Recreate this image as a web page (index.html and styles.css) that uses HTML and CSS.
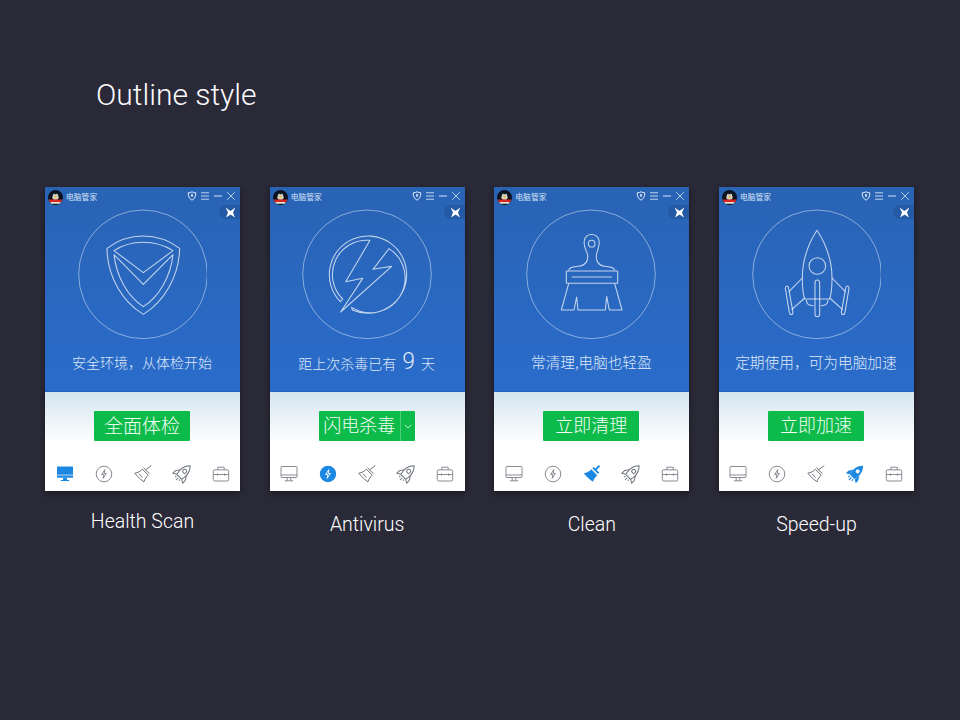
FILE: index.html
```html
<!DOCTYPE html>
<html lang="zh">
<head>
<meta charset="utf-8">
<title>Outline style</title>
<link rel="stylesheet" href="styles.css">
</head>
<body>
<svg class="sprite" aria-hidden="true">
  <defs>
    <symbol id="penguin" viewBox="0 0 14 14">
      <circle cx="7" cy="7" r="7" fill="#0c1420"/>
      <ellipse cx="7" cy="6.800" rx="2.900" ry="2.600" fill="#d9d2c0"/>
      <circle cx="5.800" cy="4.600" r="1" fill="#fff"/>
      <circle cx="8.200" cy="4.600" r="1" fill="#fff"/>
      <circle cx="5.900" cy="4.700" r=".45" fill="#111"/>
      <circle cx="8.100" cy="4.700" r=".45" fill="#111"/>
      <path d="M5.500 5.900h3L7 7.300z" fill="#f4b400"/>
      <path d="M.6 8.800h12.800c-.2 1-.6 1.800-1.100 2.500H1.700C1.200 10.600.8 9.800.6 8.800z" fill="#d8231f"/>
      <path d="M2 11.300h10L10.800 12.800H3.200z" fill="#e9e3d2"/>
    </symbol>
    <symbol id="win-shield" viewBox="0 0 10 10">
      <path d="M5 .8C6.200 1.500 7.500 1.800 8.800 1.800 8.900 5 7.700 7.800 5 9.200 2.300 7.800 1.100 5 1.200 1.800 2.500 1.800 3.800 1.500 5 .8z" fill="none" stroke="#dce8f8" stroke-width="1"/>
      <path d="M5 3v2.800" stroke="#fff" stroke-width="1.400"/>
    </symbol>
    <symbol id="win-menu" viewBox="0 0 10 10">
      <path d="M1 1.800h8M1 5h8M1 8.200h8" stroke="#c3d6f0" stroke-width="1"/>
    </symbol>
    <symbol id="win-min" viewBox="0 0 10 10">
      <path d="M1 5h8" stroke="#d4e2f5" stroke-width="1"/>
    </symbol>
    <symbol id="win-close" viewBox="0 0 10 10">
      <path d="M1.200 1.200l7.600 7.600M8.800 1.200L1.200 8.800" stroke="#c3d6f0" stroke-width=".9"/>
    </symbol>
    <symbol id="butterfly" viewBox="0 0 10 10">
      <path d="M.6.400L4.600 3.300 5.300 3.300 9.400.400 7.300 5 9 9.600 5.400 7 4.800 7 1 9.600 2.700 5z" fill="#fff"/>
    </symbol>

    <symbol id="nav-monitor" viewBox="0 0 20 20">
      <g fill="none" stroke="#7b8087" stroke-width=".9">
        <rect x="2" y="2.500" width="16" height="11" rx=".8"/>
        <path d="M2 11h16M8.200 13.500v3.200M11.800 13.500v3.200M5.800 16.800h8.400"/>
      </g>
    </symbol>
    <symbol id="nav-monitor-on" viewBox="0 0 20 20">
      <rect x="2" y="2.500" width="16" height="8.200" fill="#1c88e2"/>
      <rect x="2" y="11.400" width="16" height="2.300" fill="#1c88e2"/>
      <path d="M8 13.700h4v2.300h2.200v1H5.800v-1H8z" fill="#1c88e2"/>
    </symbol>
    <symbol id="nav-bolt" viewBox="0 0 20 20">
      <circle cx="10" cy="10" r="7.800" fill="none" stroke="#7b8087" stroke-width=".9"/>
      <path d="M10.900 5.600L7.600 10.500h2.300l-.8 3.900 3.300-5h-2.300z" fill="none" stroke="#7b8087" stroke-width=".9" stroke-linejoin="round"/>
    </symbol>
    <symbol id="nav-bolt-on" viewBox="0 0 20 20">
      <circle cx="10" cy="10" r="8.200" fill="#1c88e2"/>
      <path d="M10.900 5.600L7.600 10.500h2.300l-.8 3.900 3.300-5h-2.300z" fill="none" stroke="#fff" stroke-width=".9" stroke-linejoin="round"/>
    </symbol>
    <symbol id="nav-brush" viewBox="0 0 20 20">
      <g fill="none" stroke="#6f747b" stroke-width="1" stroke-linejoin="round">
        <path d="M1.800 9.200C5 8.700 7.500 7.300 9.300 5.200L15.200 11.200C13.200 13 11.700 15 11 17.800 8.200 16 4.800 13 1.800 9.200z"/>
        <path d="M10.400 3.700L16.600 9.800M12.500 5.900L18.300 1.600"/>
        <path d="M6 9.700l3.500 3.800"/>
      </g>
    </symbol>
    <symbol id="nav-brush-on" viewBox="0 0 20 20">
      <path d="M1.800 9.200C5 8.700 7.500 7.300 9.300 5.200L15.200 11.200C13.200 13 11.700 15 11 17.800 8.200 16 4.800 13 1.800 9.200z" fill="#1c88e2"/>
      <path d="M10.400 4.300l5.600 5.600 1.200-1.400-2.600-2.600 3.600-3.600-1.400-1.300-3.500 3.400-1.500-1.500z" fill="#1c88e2"/>
    </symbol>
    <symbol id="nav-rocket" viewBox="0 0 20 20">
      <g fill="none" stroke="#6f747b" stroke-width="1" stroke-linejoin="round" transform="rotate(45 10 10)">
        <path d="M10 -1.500C6.800 1.800 5.600 5.500 5.800 9.500L6.500 14H13.500L14.200 9.500C14.400 5.500 13.200 1.800 10 -1.500z"/>
        <circle cx="10" cy="6.200" r="2"/>
        <path d="M5.800 8L3 12.500V16L6.500 14M14.200 8L17 12.500V16L13.500 14"/>
        <path d="M10 15.500V18.500M7.500 15.500V17M12.500 15.500V17"/>
      </g>
    </symbol>
    <symbol id="nav-rocket-on" viewBox="0 0 20 20">
      <g transform="rotate(45 10 10)">
        <path d="M10 -1.500C6.800 1.800 5.600 5.500 5.800 9.500L6.500 14H13.500L14.200 9.500C14.400 5.500 13.200 1.800 10 -1.500z" fill="#1c88e2"/>
        <circle cx="10" cy="6.200" r="2" fill="#fff"/>
        <path d="M5.600 8L3 12.500V16L6.300 14zM14.400 8L17 12.500V16L13.700 14z" fill="#1c88e2"/>
        <path d="M10 15V18.500M7.500 15V17M12.500 15V17" stroke="#1c88e2" stroke-width="1.200"/>
      </g>
    </symbol>
    <symbol id="nav-bag" viewBox="0 0 20 20">
      <g fill="none" stroke="#7b8087" stroke-width=".9">
        <rect x="2.300" y="5.800" width="15.400" height="11.200" rx="1.500"/>
        <path d="M6.800 5.800V3.200h6.400v2.600M2.300 10.500h15.400M6.500 9.500v2.200M13.500 9.500v2.200"/>
      </g>
    </symbol>
  </defs>
</svg>

<main class="page">
  <h1 class="title">Outline style</h1>
  <div class="row">

    <section class="column">
      <article class="app">
        <div class="hero">
          <header class="bar">
            <svg class="logo"><use href="#penguin"/></svg>
            <span class="name">电脑管家</span>
            <span class="controls">
              <svg class="ctl"><use href="#win-shield"/></svg>
              <svg class="ctl"><use href="#win-menu"/></svg>
              <svg class="ctl"><use href="#win-min"/></svg>
              <svg class="ctl"><use href="#win-close"/></svg>
            </span>
          </header>
          <span class="pill"><svg class="pill-icon"><use href="#butterfly"/></svg></span>
          <svg class="art" viewBox="109 87 390 390">
            <circle class="ring" cx="307" cy="283" r="193"/>
            <g class="line">
              <path d="M199 205C265 156 350 156 417 205C415 290 370 365 308 403C245 365 200 290 199 205Z"/>
              <path d="M220 212C270 178 345 178 397 212L308 278Z"/>
              <path d="M220 224L308 313L397 224C390 290 355 350 308 380C262 350 227 290 220 224Z"/>
            </g>
          </svg>
          <p class="status">安全环境，从体检开始</p>
        </div>
        <div class="lower">
          <button class="cta cta-large" type="button">全面体检</button>
          <nav class="nav">
            <svg class="tab"><use href="#nav-monitor-on"/></svg>
            <svg class="tab"><use href="#nav-bolt"/></svg>
            <svg class="tab"><use href="#nav-brush"/></svg>
            <svg class="tab"><use href="#nav-rocket"/></svg>
            <svg class="tab"><use href="#nav-bag"/></svg>
          </nav>
        </div>
      </article>
      <p class="caption caption-high">Health Scan</p>
    </section>

    <section class="column">
      <article class="app">
        <div class="hero">
          <header class="bar">
            <svg class="logo"><use href="#penguin"/></svg>
            <span class="name">电脑管家</span>
            <span class="controls">
              <svg class="ctl"><use href="#win-shield"/></svg>
              <svg class="ctl"><use href="#win-menu"/></svg>
              <svg class="ctl"><use href="#win-min"/></svg>
              <svg class="ctl"><use href="#win-close"/></svg>
            </span>
          </header>
          <span class="pill"><svg class="pill-icon"><use href="#butterfly"/></svg></span>
          <svg class="art" viewBox="111 88 390 390">
            <circle class="ring" cx="306" cy="284" r="193"/>
            <g class="line">
              <path d="M315 182A103 103 0 0 0 233 358L226 366A116 116 0 1 1 262 391L260 383A103 103 0 0 0 372 207"/>
              <path d="M315 182L242 306L293 296L227 397L380 260L324 269L372 207"/>
            </g>
          </svg>
          <p class="status">距上次杀毒已有<span class="count">9</span>天</p>
        </div>
        <div class="lower">
          <div class="cta cta-split">
            <span class="cta-main">闪电杀毒</span>
            <span class="cta-more"><svg class="chevron" viewBox="0 0 8 5"><path d="M.7.800L4 4 7.300.800"/></svg></span>
          </div>
          <nav class="nav">
            <svg class="tab"><use href="#nav-monitor"/></svg>
            <svg class="tab"><use href="#nav-bolt-on"/></svg>
            <svg class="tab"><use href="#nav-brush"/></svg>
            <svg class="tab"><use href="#nav-rocket"/></svg>
            <svg class="tab"><use href="#nav-bag"/></svg>
          </nav>
        </div>
      </article>
      <p class="caption">Antivirus</p>
    </section>

    <section class="column">
      <article class="app">
        <div class="hero">
          <header class="bar">
            <svg class="logo"><use href="#penguin"/></svg>
            <span class="name">电脑管家</span>
            <span class="controls">
              <svg class="ctl"><use href="#win-shield"/></svg>
              <svg class="ctl"><use href="#win-menu"/></svg>
              <svg class="ctl"><use href="#win-min"/></svg>
              <svg class="ctl"><use href="#win-close"/></svg>
            </span>
          </header>
          <span class="pill"><svg class="pill-icon"><use href="#butterfly"/></svg></span>
          <svg class="art" viewBox="108 88 390 390">
            <circle class="ring" cx="303" cy="284" r="193"/>
            <g class="line">
              <path d="M236 272C238 262 250 262 265 260C290 257 296 240 292 222C285 205 280 195 283 183C287 158 322 158 327 183C330 195 325 205 320 222C316 240 322 257 345 260C360 262 372 262 374 272"/>
              <circle cx="305" cy="192" r="10"/>
              <rect x="229" y="274" width="154" height="37"/>
              <path d="M245 292H366"/>
              <path d="M236 312L214 391H252L260 352L264 391H346L350 350L358 391H396L374 312"/>
            </g>
          </svg>
          <p class="status status-mid">常清理,电脑也轻盈</p>
        </div>
        <div class="lower">
          <button class="cta" type="button">立即清理</button>
          <nav class="nav">
            <svg class="tab"><use href="#nav-monitor"/></svg>
            <svg class="tab"><use href="#nav-bolt"/></svg>
            <svg class="tab"><use href="#nav-brush-on"/></svg>
            <svg class="tab"><use href="#nav-rocket"/></svg>
            <svg class="tab"><use href="#nav-bag"/></svg>
          </nav>
        </div>
      </article>
      <p class="caption">Clean</p>
    </section>

    <section class="column">
      <article class="app">
        <div class="hero">
          <header class="bar">
            <svg class="logo"><use href="#penguin"/></svg>
            <span class="name">电脑管家</span>
            <span class="controls">
              <svg class="ctl"><use href="#win-shield"/></svg>
              <svg class="ctl"><use href="#win-menu"/></svg>
              <svg class="ctl"><use href="#win-min"/></svg>
              <svg class="ctl"><use href="#win-close"/></svg>
            </span>
          </header>
          <span class="pill"><svg class="pill-icon"><use href="#butterfly"/></svg></span>
          <svg class="art" viewBox="105 88 390 390">
            <circle class="ring" cx="303" cy="284" r="193"/>
            <g class="line">
              <path d="M303 152C275 195 258 240 259 300C259 325 262 345 266 358H341C345 345 348 325 348 300C349 240 331 195 303 152Z"/>
              <circle cx="304" cy="259" r="25"/>
              <path d="M271 361C272 372 276 377 292 378M336 361C335 372 331 377 315 378"/>
              <path d="M297 310C297 298 311 298 311 310V403C311 414 297 414 297 403Z"/>
              <path d="M259 295L219 336M266 355L227 390"/>
              <path d="M348 295L388 336M341 355L380 390"/>
              <path d="M208 326C209 317 217 317 218 326L231 398C230 407 222 407 220 398Z"/>
              <path d="M399 326C398 317 390 317 389 326L376 398C377 407 385 407 387 398Z"/>
            </g>
          </svg>
          <p class="status status-wide">定期使用，可为电脑加速</p>
        </div>
        <div class="lower">
          <button class="cta" type="button">立即加速</button>
          <nav class="nav">
            <svg class="tab"><use href="#nav-monitor"/></svg>
            <svg class="tab"><use href="#nav-bolt"/></svg>
            <svg class="tab"><use href="#nav-brush"/></svg>
            <svg class="tab"><use href="#nav-rocket-on"/></svg>
            <svg class="tab"><use href="#nav-bag"/></svg>
          </nav>
        </div>
      </article>
      <p class="caption">Speed-up</p>
    </section>

  </div>
</main>
</body>
</html>
```
FILE: styles.css
```css
* { box-sizing: border-box; }

html, body {
  margin: 0;
  padding: 0;
}

body {
  width: 960px;
  height: 720px;
  overflow: hidden;
  background: #2a2937;
  color: #fff;
  font-family: Roboto, "Noto Sans CJK SC", sans-serif;
}

.sprite {
  position: absolute;
  width: 0;
  height: 0;
}

.page {
  padding: 75px 46px 0 45px;
}

.title {
  margin: 0 0 0 51px;
  height: 112px;
  font-size: 30px;
  line-height: 40px;
  font-weight: 300;
  color: #fafafc;
}

.row {
  display: flex;
  gap: 29.67px;
}

.column {
  width: 195px;
  display: flex;
  flex-direction: column;
  align-items: center;
}

.app {
  width: 195px;
  height: 304px;
  display: flex;
  flex-direction: column;
  box-shadow: 0 2px 6px rgba(0, 0, 0, .45);
  font-family: "Noto Sans CJK SC", sans-serif;
}

.hero {
  position: relative;
  height: 205px;
  display: flex;
  flex-direction: column;
  align-items: center;
  background: linear-gradient(#2963b4, #2a6ccb);
  border-bottom: 1px solid #2362b8;
}

.bar {
  width: 100%;
  height: 20px;
  display: flex;
  align-items: center;
  padding: 0 4px 0 3px;
}

.logo {
  width: 15px;
  height: 15px;
  flex: none;
}

.name {
  margin-left: 3px;
  font-size: 7.8px;
  line-height: 10px;
  color: #d6e4f7;
}

.controls {
  margin-left: auto;
  display: flex;
  gap: 3px;
  margin-top: -2px;
}

.ctl {
  width: 10px;
  height: 10px;
}

.pill {
  position: absolute;
  top: 18px;
  right: 0;
  width: 21px;
  height: 14px;
  display: flex;
  align-items: center;
  padding-left: 6px;
  border-radius: 7px 0 0 7px;
  background: rgba(30, 70, 135, .35);
}

.pill-icon {
  width: 11px;
  height: 11px;
}

.art {
  width: 130px;
  height: 130px;
  margin: 2px 1px 0 0;
  flex: none;
}

.ring {
  fill: none;
  stroke: rgba(255, 255, 255, .45);
  stroke-width: 3;
}

.line {
  fill: none;
  stroke: rgba(255, 255, 255, .72);
  stroke-width: 3.200;
  stroke-linejoin: round;
}

.status {
  margin: 13px 1px 0 0;
  height: 20px;
  font-size: 14px;
  line-height: 20px;
  font-weight: 300;
  color: #dfe9f8;
  white-space: nowrap;
}

.status-mid {
  font-size: 14.600px;
}

.status-wide {
  font-size: 14.700px;
}

.count {
  margin: 0 6px;
  font-family: Roboto, sans-serif;
  font-size: 23px;
  font-weight: 300;
  line-height: 20px;
}

.lower {
  flex: 1;
  display: flex;
  flex-direction: column;
  align-items: center;
  padding: 19px 1px 0 0;
  background: linear-gradient(#d5e5f0, #ffffff 52px);
}

.cta {
  flex: none;
  width: 96px;
  height: 30px;
  padding: 0 0 3px;
  border: 0;
  border-radius: 1px;
  background: #0dbb4b;
  color: #f4fcf6;
  font-family: "Noto Sans CJK SC", sans-serif;
  font-size: 18px;
  font-weight: 300;
  line-height: 27px;
  text-align: center;
}

.cta-large {
  font-size: 19px;
}

.cta-split {
  display: flex;
  padding: 0;
}

.cta-main {
  width: 82px;
  height: 30px;
  border-right: 1px solid #4fd07c;
}

.cta-more {
  flex: 1;
  display: flex;
  align-items: center;
  justify-content: center;
}

.chevron {
  width: 8px;
  height: 5px;
  fill: none;
  stroke: #c6f0d4;
  stroke-width: 1;
}

.nav {
  margin: 23px -1px 0 0;
  width: 195px;
  display: grid;
  grid-template-columns: repeat(5, 39px);
  justify-items: center;
}

.tab {
  width: 20px;
  height: 20px;
}

.caption {
  margin: 21px 0 0;
  font-size: 19.500px;
  line-height: 26px;
  font-weight: 300;
  color: #ffffff;
  white-space: nowrap;
}

.caption-high {
  margin-top: 18px;
}
```
